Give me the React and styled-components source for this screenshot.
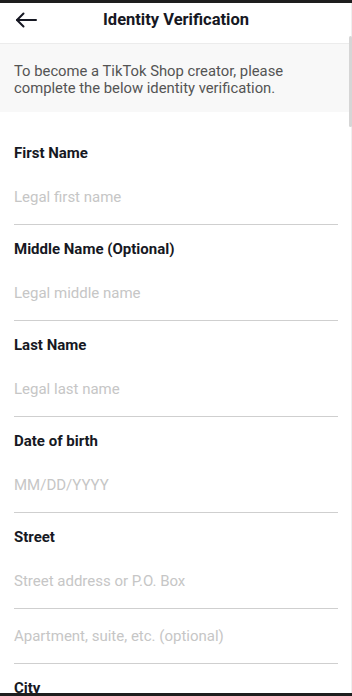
import React from 'react';
import styled, { createGlobalStyle } from 'styled-components';

const Global = createGlobalStyle`
    html, body {
        margin: 0;
        padding: 0;
        background: #fff;
    }
    * {
        box-sizing: border-box;
    }
`;

const Frame = styled.div`
    position: relative;
    width: 352px;
    height: 696px;
    overflow: hidden;
    background: #fff;
    border-top: 3px solid #1e1e1e;
    border-bottom: 3px solid #1e1e1e;
    font-family: Roboto, "Liberation Sans", sans-serif;
    color: #161823;
`;

const Header = styled.div`
    position: relative;
    height: 41px;
    display: flex;
    align-items: center;
    justify-content: center;
    border-bottom: 1px solid #ececec;
`;

const BackButton = styled.button`
    position: absolute;
    left: 14px;
    top: 8px;
    width: 24px;
    height: 18px;
    padding: 0;
    border: 0;
    background: none;
    display: flex;
    align-items: center;
    justify-content: center;
`;

const Title = styled.h1`
    margin: 0;
    font-size: 16.5px;
    font-weight: 700;
    line-height: 20px;
    margin-top: -7px;
`;

const Notice = styled.div`
    background: #f8f8f8;
    padding: 19px 30px 15px 14px;
    font-size: 14.8px;
    line-height: 17px;
    color: #545454;
`;

const Form = styled.div`
    padding: 31px 14px 0;
`;

const Field = styled.div`
    margin-bottom: 14px;
`;

const Label = styled.div`
    font-size: 15px;
    font-weight: 700;
    line-height: 20px;
    color: #161823;
`;

const Input = styled.div`
    padding: ${p => (p.second ? '17px' : '24px')} 0 17px;
    font-size: 15px;
    line-height: 20px;
    color: #c6c6c6;
    border-bottom: 1px solid #cfcfcf;
`;

const Scrollbar = styled.div`
    position: absolute;
    top: 33px;
    right: 0;
    width: 3px;
    height: 91px;
    border-radius: 2px;
    background: #d6d6d6;
`;

const Track = styled.div`
    position: absolute;
    top: 0;
    right: 0;
    width: 1px;
    height: 100%;
    background: #efefef;
`;

const fields = [
    { label: 'First Name', inputs: ['Legal first name'] },
    { label: 'Middle Name (Optional)', inputs: ['Legal middle name'] },
    { label: 'Last Name', inputs: ['Legal last name'] },
    { label: 'Date of birth', inputs: ['MM/DD/YYYY'] },
    { label: 'Street', inputs: ['Street address or P.O. Box', 'Apartment, suite, etc. (optional)'] },
    { label: 'City', inputs: ['City'] },
];

export default function App() {
    return (
        <Frame>
            <Global />
            <Header>
                <BackButton>
                    <svg width="22" height="16" viewBox="0 0 22 16" fill="none" stroke="#161823" strokeWidth="2" strokeLinecap="round" strokeLinejoin="round">
                        <path d="M21 8H2" />
                        <path d="M8.5 1.5L2 8l6.5 6.5" />
                    </svg>
                </BackButton>
                <Title>Identity Verification</Title>
            </Header>
            <Notice>
                To become a TikTok Shop creator, please complete the below identity verification.
            </Notice>
            <Form>
                {fields.map(f => (
                    <Field key={f.label}>
                        <Label>{f.label}</Label>
                        {f.inputs.map((text, i) => (
                            <Input key={text} second={i > 0}>{text}</Input>
                        ))}
                    </Field>
                ))}
            </Form>
            <Track />
            <Scrollbar />
        </Frame>
    );
}
